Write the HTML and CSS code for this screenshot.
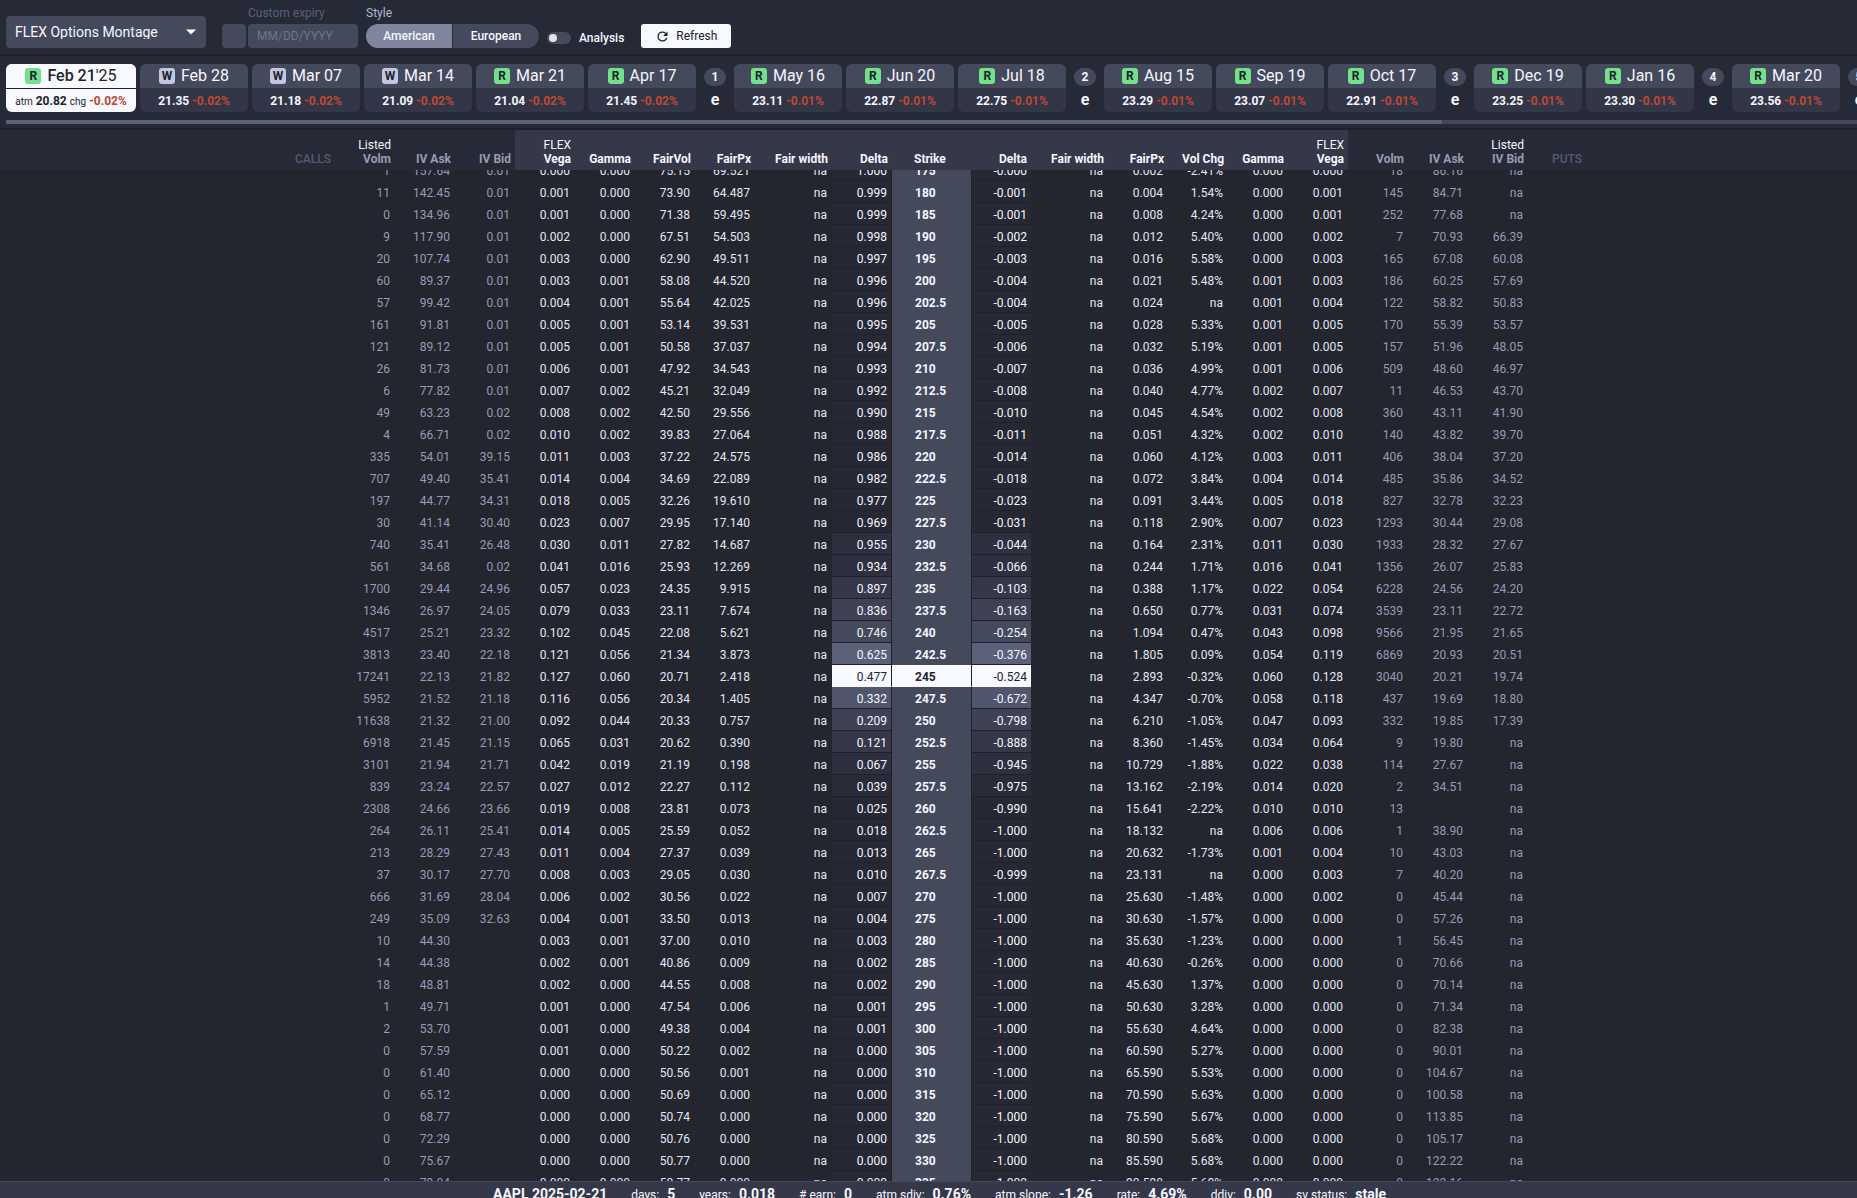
FILE: index.html
```html
<!DOCTYPE html>
<html lang="en">
<head>
<meta charset="utf-8">
<title>FLEX Options Montage</title>
<link rel="stylesheet" href="styles.css">
</head>
<body>
<div class="app">
  <header class="toolbar">
    <div class="select-wrap">
      <select class="view-select" aria-label="View"><option>FLEX Options Montage</option></select>
      <svg class="select-arrow" viewBox="0 0 10 6" aria-hidden="true"><path d="M0 0.5h10L5 5.5z"/></svg>
    </div>
    <div class="field field-expiry">
      <label class="field-label muted" for="expiry">Custom expiry</label>
      <div class="expiry-row">
        <button class="expiry-toggle" type="button" aria-label="Use custom expiry"></button>
        <input class="expiry-input" id="expiry" type="text" placeholder="MM/DD/YYYY">
      </div>
    </div>
    <div class="field">
      <span class="field-label" id="style-label">Style</span>
      <div class="segmented" role="group" aria-labelledby="style-label">
        <button class="segment active" type="button">American</button>
        <button class="segment" type="button">European</button>
      </div>
    </div>
    <label class="analysis"><input class="switch" type="checkbox">Analysis</label>
    <button class="refresh" type="button">
      <svg class="refresh-icon" viewBox="0 0 24 24" aria-hidden="true"><path d="M17.65 6.35A7.96 7.96 0 0 0 12 4a8 8 0 1 0 7.73 10h-2.08A6 6 0 1 1 12 6c1.66 0 3.14.69 4.22 1.78L13 11h7V4z"/></svg>
      Refresh
    </button>
  </header>

  <nav class="expiries" aria-label="Expiries">
    <div class="expiry-list" id="expiry-list"></div>
    <div class="scroll-track"><div class="scroll-thumb"></div></div>
  </nav>

  <main class="chain" id="chain">
    <table class="chain-table">
      <colgroup>
        <col class="c-gutter"><col>
        <col class="c-num"><col class="c-num"><col class="c-num">
        <col class="c-num"><col class="c-num"><col class="c-num"><col class="c-num">
        <col class="c-width"><col class="c-num"><col class="c-strike"><col class="c-num"><col class="c-width">
        <col class="c-num"><col class="c-num"><col class="c-num"><col class="c-num">
        <col class="c-num"><col class="c-num"><col class="c-num"><col>
      </colgroup>
      <thead>
        <tr>
          <th></th><th class="side">CALLS</th>
          <th class="listed"><span class="group">Listed</span>Volm</th><th class="listed">IV Ask</th><th class="listed">IV Bid</th>
          <th class="flex"><span class="group">FLEX</span>Vega</th><th class="flex">Gamma</th><th class="flex">FairVol</th><th class="flex">FairPx</th>
          <th class="flex">Fair width</th><th class="flex">Delta</th><th class="flex strike-head">Strike</th><th class="flex">Delta</th><th class="flex">Fair width</th>
          <th class="flex">FairPx</th><th class="flex">Vol Chg</th><th class="flex">Gamma</th><th class="flex"><span class="group">FLEX</span>Vega</th>
          <th class="listed">Volm</th><th class="listed">IV Ask</th><th class="listed"><span class="group">Listed</span>IV Bid</th><th class="side side-puts">PUTS</th>
        </tr>
      </thead>
      <tbody id="rows"></tbody>
    </table>
  </main>

  <footer class="status">
    <strong>AAPL 2025-02-21</strong>
    <span class="stat">days: <b>5</b></span>
    <span class="stat">years: <b>0.018</b></span>
    <span class="stat"># earn: <b>0</b></span>
    <span class="stat">atm sdiv: <b>0.76%</b></span>
    <span class="stat">atm slope: <b>-1.26</b></span>
    <span class="stat">rate: <b>4.69%</b></span>
    <span class="stat">ddiv: <b>0.00</b></span>
    <span class="stat">sv status: <b>stale</b></span>
  </footer>
</div>
<script src="script.js"></script>
</body>
</html>
```

FILE: styles.css
```css
* { box-sizing: border-box; }

html, body { height: 100%; margin: 0; overflow: hidden; }

body {
  background: #23252f;
  color: #f5f7ff;
  font: 12px/14px Roboto, "Liberation Sans", sans-serif;
}

button, input, select { font: inherit; color: inherit; border: 0; margin: 0; padding: 0; }

.app {
  display: flex;
  flex-direction: column;
  height: calc(100vh + 8px);
}

/* Toolbar */
.toolbar {
  display: flex;
  align-items: flex-end;
  flex: none;
  padding: 6px 6px 6px;
  background: #262936;
  border-bottom: 2px solid #1e202b;
}

.select-wrap { position: relative; width: 200px; margin-right: 16px; }

.view-select {
  appearance: none;
  width: 100%;
  height: 32px;
  padding: 0 9px;
  border-radius: 4px;
  background: #45495c;
  font-size: 14px;
}

.select-arrow {
  position: absolute;
  right: 10px;
  top: 13px;
  width: 10px;
  height: 6px;
  fill: #fff;
}

.field { display: flex; flex-direction: column; gap: 4px; }
.field-expiry { margin-right: 8px; }
.field-label { color: #b4b8cd; }
.field-label.muted { color: #5b6079; padding-left: 26px; }

.expiry-row { display: flex; gap: 2px; }
.expiry-toggle { width: 24px; height: 24px; border-radius: 4px; background: #45495c; }
.expiry-input { width: 110px; height: 24px; padding: 0 9px; border-radius: 4px; background: #45495c; }
.expiry-input::placeholder { color: #717489; opacity: 1; }

.segmented { display: flex; gap: 1px; }
.segment { width: 86px; height: 24px; background: #45495c; font-weight: 500; }
.segment:first-child { border-radius: 12px 0 0 12px; }
.segment:last-child { border-radius: 0 12px 12px 0; }
.segment.active { background: #7f859e; }

.analysis {
  display: flex;
  align-items: center;
  gap: 8px;
  margin: 0 17px 3px 8px;
  font-weight: 500;
}

.switch {
  appearance: none;
  width: 24px;
  height: 12px;
  padding: 2px;
  border-radius: 6px;
  background: #45495c;
}
.switch::before {
  content: "";
  display: block;
  width: 8px;
  height: 8px;
  border-radius: 50%;
  background: #e4e4e6;
}

.refresh {
  display: flex;
  align-items: center;
  justify-content: center;
  gap: 6px;
  width: 90px;
  height: 24px;
  border-radius: 3px;
  background: #f7f9ff;
  color: #20222c;
}
.refresh-icon { width: 15px; height: 15px; fill: #20222c; }

/* Expiry strip */
.expiries {
  flex: none;
  padding: 8px 0 4px 6px;
  background: #262936;
  border-bottom: 2px solid #1e202b;
}

.expiry-list { display: flex; gap: 4px; overflow: hidden; }

.expiry-card {
  flex: none;
  width: 108px;
  border-radius: 6px;
  overflow: hidden;
  background: #333647;
}
.expiry-card.selected { width: 130px; background: #f7f9ff; color: #20222c; }

.expiry-date {
  display: flex;
  align-items: center;
  justify-content: center;
  gap: 6px;
  height: 24px;
  background: #45495c;
  font-size: 16px;
}
.selected .expiry-date { background: #f7f9ff; }
.selected .day { font-weight: 500; }

.badge {
  width: 16px;
  height: 16px;
  border-radius: 3px;
  background: #74e08c;
  color: #20222c;
  font-size: 12px;
  line-height: 16px;
  font-weight: 700;
}
.badge.weekly { background: #c1c7e0; }

.expiry-vol {
  height: 24px;
  line-height: 26px;
  font-weight: 700;
}
.selected .expiry-vol { border-top: 1px solid #20222c; line-height: 24px; }
.expiry-vol small { font-size: 10px; font-weight: 400; }
.chg { color: #bf4736; font-weight: 700; }

.earn {
  flex: none;
  width: 22px;
  margin: 4px 4px 0;
  text-align: center;
  font-weight: 700;
}
.earn-num { height: 18px; line-height: 18px; border-radius: 9px; background: #45495c; }
.earn-mark { padding-top: 6px; font-size: 16px; line-height: 16px; }

.scroll-track { height: 4px; margin-top: 8px; background: #45485b; }
.scroll-thumb { width: 77.6%; height: 4px; background: #5c617a; }

/* Option chain */
.chain { flex: 1; min-height: 0; overflow: auto; scrollbar-width: none; }

.chain-table {
  width: 100%;
  table-layout: fixed;
  border-collapse: separate;
  border-spacing: 0;
}
.c-gutter { width: 6px; }
.c-num { width: 60px; }
.c-width { width: 77px; }
.c-strike { width: 79px; }

th {
  position: sticky;
  top: 0;
  height: 40px;
  padding: 0 4px 4px 0;
  background: #262a36;
  text-align: right;
  vertical-align: bottom;
  font-weight: 700;
  white-space: nowrap;
}
th.flex { background: #353849; }
th.listed { color: #989cb4; }
th.side { color: #555a70; font-weight: 500; }
th.side-puts { text-align: left; padding-left: 24px; }
th.strike-head { text-align: left; padding-left: 22px; }
.group { display: block; color: #f5f7ff; font-weight: 400; }

td {
  height: 22px;
  padding: 2px 5px 0 0;
  text-align: right;
  color: #e3e7f4;
}
td.listed { color: #989cb4; }

td.strike {
  padding-left: 23px;
  background: #45495c;
  color: #f5f7ff;
  text-align: left;
  font-weight: 700;
}

td.delta {
  padding-right: 4px;
  background: #262833;
  border-bottom: 1px solid #1e202a;
  border-right: 1px solid #1e202a;
  color: #f5f7ff;
}
td.put { border-right: 0; border-left: 1px solid #1e202a; }
td.heat1 { background: #292b38; }
td.heat2 { background: #2e303f; }
td.heat3 { background: #353849; }
td.heat4 { background: #3f4254; }
td.heat5 { background: #45495c; }
td.heat6 { background: #51566d; }
td.heat7 { background: #5c617a; }
tr.atm .strike, tr.atm .delta { background: #f7f9ff; color: #20222c; border-bottom-color: #f7f9ff; }

/* Status bar */
.status {
  display: flex;
  flex: none;
  justify-content: center;
  gap: 24px;
  height: 25px;
  padding-left: 22px;
  background: #353849;
  border-top: 1px solid #45495c;
  line-height: 24px;
  white-space: nowrap;
}
.status strong { font-size: 14px; }
.stat b { margin-left: 5px; font-size: 14px; }
```

FILE: script.js
```js
// type, date, at-the-money vol, change; a bare number is an earnings marker
const expiries = [
  ["R", "Feb 21", "20.82", "-0.02%", "'25"],
  ["W", "Feb 28", "21.35", "-0.02%"],
  ["W", "Mar 07", "21.18", "-0.02%"],
  ["W", "Mar 14", "21.09", "-0.02%"],
  ["R", "Mar 21", "21.04", "-0.02%"],
  ["R", "Apr 17", "21.45", "-0.02%"],
  1,
  ["R", "May 16", "23.11", "-0.01%"],
  ["R", "Jun 20", "22.87", "-0.01%"],
  ["R", "Jul 18", "22.75", "-0.01%"],
  2,
  ["R", "Aug 15", "23.29", "-0.01%"],
  ["R", "Sep 19", "23.07", "-0.01%"],
  ["R", "Oct 17", "22.91", "-0.01%"],
  3,
  ["R", "Dec 19", "23.25", "-0.01%"],
  ["R", "Jan 16", "23.30", "-0.01%"],
  4,
  ["R", "Mar 20", "23.56", "-0.01%"],
  5
];

document.getElementById("expiry-list").innerHTML = expiries.map(e => {
  if (typeof e === "number") {
    return `<div class="earn"><div class="earn-num">${e}</div><div class="earn-mark">e</div></div>`;
  }
  const [type, date, vol, chg, year] = e;
  const label = year ? ["<small>atm</small> ", " <small>chg</small>"] : ["", ""];
  return `<button type="button" class="expiry-card${year ? " selected" : ""}">
    <div class="expiry-date"><span class="badge${type === "W" ? " weekly" : ""}">${type}</span><span><span class="day">${date}</span>${year || ""}</span></div>
    <div class="expiry-vol">${label[0]}${vol}${label[1]} <span class="chg">${chg}</span></div>
  </button>`;
}).join("");

// call: volm, iv ask, iv bid, vega, gamma, fair vol, fair px, delta | strike |
// put: delta, fair px, vol chg, gamma, vega, volm, iv ask, iv bid ("-" is blank)
const data = `
1 157.64 0.01 0.000 0.000 75.15 69.521 1.000 175 -0.000 0.002 -2.41% 0.000 0.000 18 86.16 na
11 142.45 0.01 0.001 0.000 73.90 64.487 0.999 180 -0.001 0.004 1.54% 0.000 0.001 145 84.71 na
0 134.96 0.01 0.001 0.000 71.38 59.495 0.999 185 -0.001 0.008 4.24% 0.000 0.001 252 77.68 na
9 117.90 0.01 0.002 0.000 67.51 54.503 0.998 190 -0.002 0.012 5.40% 0.000 0.002 7 70.93 66.39
20 107.74 0.01 0.003 0.000 62.90 49.511 0.997 195 -0.003 0.016 5.58% 0.000 0.003 165 67.08 60.08
60 89.37 0.01 0.003 0.001 58.08 44.520 0.996 200 -0.004 0.021 5.48% 0.001 0.003 186 60.25 57.69
57 99.42 0.01 0.004 0.001 55.64 42.025 0.996 202.5 -0.004 0.024 na 0.001 0.004 122 58.82 50.83
161 91.81 0.01 0.005 0.001 53.14 39.531 0.995 205 -0.005 0.028 5.33% 0.001 0.005 170 55.39 53.57
121 89.12 0.01 0.005 0.001 50.58 37.037 0.994 207.5 -0.006 0.032 5.19% 0.001 0.005 157 51.96 48.05
26 81.73 0.01 0.006 0.001 47.92 34.543 0.993 210 -0.007 0.036 4.99% 0.001 0.006 509 48.60 46.97
6 77.82 0.01 0.007 0.002 45.21 32.049 0.992 212.5 -0.008 0.040 4.77% 0.002 0.007 11 46.53 43.70
49 63.23 0.02 0.008 0.002 42.50 29.556 0.990 215 -0.010 0.045 4.54% 0.002 0.008 360 43.11 41.90
4 66.71 0.02 0.010 0.002 39.83 27.064 0.988 217.5 -0.011 0.051 4.32% 0.002 0.010 140 43.82 39.70
335 54.01 39.15 0.011 0.003 37.22 24.575 0.986 220 -0.014 0.060 4.12% 0.003 0.011 406 38.04 37.20
707 49.40 35.41 0.014 0.004 34.69 22.089 0.982 222.5 -0.018 0.072 3.84% 0.004 0.014 485 35.86 34.52
197 44.77 34.31 0.018 0.005 32.26 19.610 0.977 225 -0.023 0.091 3.44% 0.005 0.018 827 32.78 32.23
30 41.14 30.40 0.023 0.007 29.95 17.140 0.969 227.5 -0.031 0.118 2.90% 0.007 0.023 1293 30.44 29.08
740 35.41 26.48 0.030 0.011 27.82 14.687 0.955 230 -0.044 0.164 2.31% 0.011 0.030 1933 28.32 27.67
561 34.68 0.02 0.041 0.016 25.93 12.269 0.934 232.5 -0.066 0.244 1.71% 0.016 0.041 1356 26.07 25.83
1700 29.44 24.96 0.057 0.023 24.35 9.915 0.897 235 -0.103 0.388 1.17% 0.022 0.054 6228 24.56 24.20
1346 26.97 24.05 0.079 0.033 23.11 7.674 0.836 237.5 -0.163 0.650 0.77% 0.031 0.074 3539 23.11 22.72
4517 25.21 23.32 0.102 0.045 22.08 5.621 0.746 240 -0.254 1.094 0.47% 0.043 0.098 9566 21.95 21.65
3813 23.40 22.18 0.121 0.056 21.34 3.873 0.625 242.5 -0.376 1.805 0.09% 0.054 0.119 6869 20.93 20.51
17241 22.13 21.82 0.127 0.060 20.71 2.418 0.477 245 -0.524 2.893 -0.32% 0.060 0.128 3040 20.21 19.74
5952 21.52 21.18 0.116 0.056 20.34 1.405 0.332 247.5 -0.672 4.347 -0.70% 0.058 0.118 437 19.69 18.80
11638 21.32 21.00 0.092 0.044 20.33 0.757 0.209 250 -0.798 6.210 -1.05% 0.047 0.093 332 19.85 17.39
6918 21.45 21.15 0.065 0.031 20.62 0.390 0.121 252.5 -0.888 8.360 -1.45% 0.034 0.064 9 19.80 na
3101 21.94 21.71 0.042 0.019 21.19 0.198 0.067 255 -0.945 10.729 -1.88% 0.022 0.038 114 27.67 na
839 23.24 22.57 0.027 0.012 22.27 0.112 0.039 257.5 -0.975 13.162 -2.19% 0.014 0.020 2 34.51 na
2308 24.66 23.66 0.019 0.008 23.81 0.073 0.025 260 -0.990 15.641 -2.22% 0.010 0.010 13 - na
264 26.11 25.41 0.014 0.005 25.59 0.052 0.018 262.5 -1.000 18.132 na 0.006 0.006 1 38.90 na
213 28.29 27.43 0.011 0.004 27.37 0.039 0.013 265 -1.000 20.632 -1.73% 0.001 0.004 10 43.03 na
37 30.17 27.70 0.008 0.003 29.05 0.030 0.010 267.5 -0.999 23.131 na 0.000 0.003 7 40.20 na
666 31.69 28.04 0.006 0.002 30.56 0.022 0.007 270 -1.000 25.630 -1.48% 0.000 0.002 0 45.44 na
249 35.09 32.63 0.004 0.001 33.50 0.013 0.004 275 -1.000 30.630 -1.57% 0.000 0.000 0 57.26 na
10 44.30 - 0.003 0.001 37.00 0.010 0.003 280 -1.000 35.630 -1.23% 0.000 0.000 1 56.45 na
14 44.38 - 0.002 0.001 40.86 0.009 0.002 285 -1.000 40.630 -0.26% 0.000 0.000 0 70.66 na
18 48.81 - 0.002 0.000 44.55 0.008 0.002 290 -1.000 45.630 1.37% 0.000 0.000 0 70.14 na
1 49.71 - 0.001 0.000 47.54 0.006 0.001 295 -1.000 50.630 3.28% 0.000 0.000 0 71.34 na
2 53.70 - 0.001 0.000 49.38 0.004 0.001 300 -1.000 55.630 4.64% 0.000 0.000 0 82.38 na
0 57.59 - 0.001 0.000 50.22 0.002 0.000 305 -1.000 60.590 5.27% 0.000 0.000 0 90.01 na
0 61.40 - 0.000 0.000 50.56 0.001 0.000 310 -1.000 65.590 5.53% 0.000 0.000 0 104.67 na
0 65.12 - 0.000 0.000 50.69 0.000 0.000 315 -1.000 70.590 5.63% 0.000 0.000 0 100.58 na
0 68.77 - 0.000 0.000 50.74 0.000 0.000 320 -1.000 75.590 5.67% 0.000 0.000 0 113.85 na
0 72.29 - 0.000 0.000 50.76 0.000 0.000 325 -1.000 80.590 5.68% 0.000 0.000 0 105.17 na
0 75.67 - 0.000 0.000 50.77 0.000 0.000 330 -1.000 85.590 5.68% 0.000 0.000 0 122.22 na
0 79.04 - 0.000 0.000 50.77 0.000 0.000 335 -1.000 90.590 5.68% 0.000 0.000 0 122.16 na
0 82.31 - 0.000 0.000 50.77 0.000 0.000 340 -1.000 95.590 5.68% 0.000 0.000 0 126.40 na`;

// Shade grows as the call delta nears one half
const steps = [0.035, 0.045, 0.09, 0.15, 0.22, 0.3, 0.36];
const heat = delta => {
  const edge = Math.min(delta, 1 - delta);
  const level = steps.filter(s => edge >= s).length;
  return level ? ` heat${level}` : "";
};

const cell = (value, cls) => `<td${cls ? ` class="${cls}"` : ""}>${value === "-" ? "" : value}</td>`;

document.getElementById("rows").innerHTML = data.trim().split("\n").map(line => {
  const v = line.split(" ");
  const shade = heat(Number(v[7]));
  const cells = [
    "<td></td><td></td>",
    ...v.slice(0, 3).map(x => cell(x, "listed")),
    ...v.slice(3, 7).map(x => cell(x)),
    cell("na"),
    cell(v[7], "delta" + shade),
    cell(v[8], "strike"),
    cell(v[9], "delta put" + shade),
    cell("na"),
    ...v.slice(10, 14).map(x => cell(x)),
    ...v.slice(14, 17).map(x => cell(x, "listed")),
    "<td></td>"
  ];
  return `<tr${v[8] === "245" ? ' class="atm"' : ""}>${cells.join("")}</tr>`;
}).join("");

document.getElementById("chain").scrollTop = 11;
```
